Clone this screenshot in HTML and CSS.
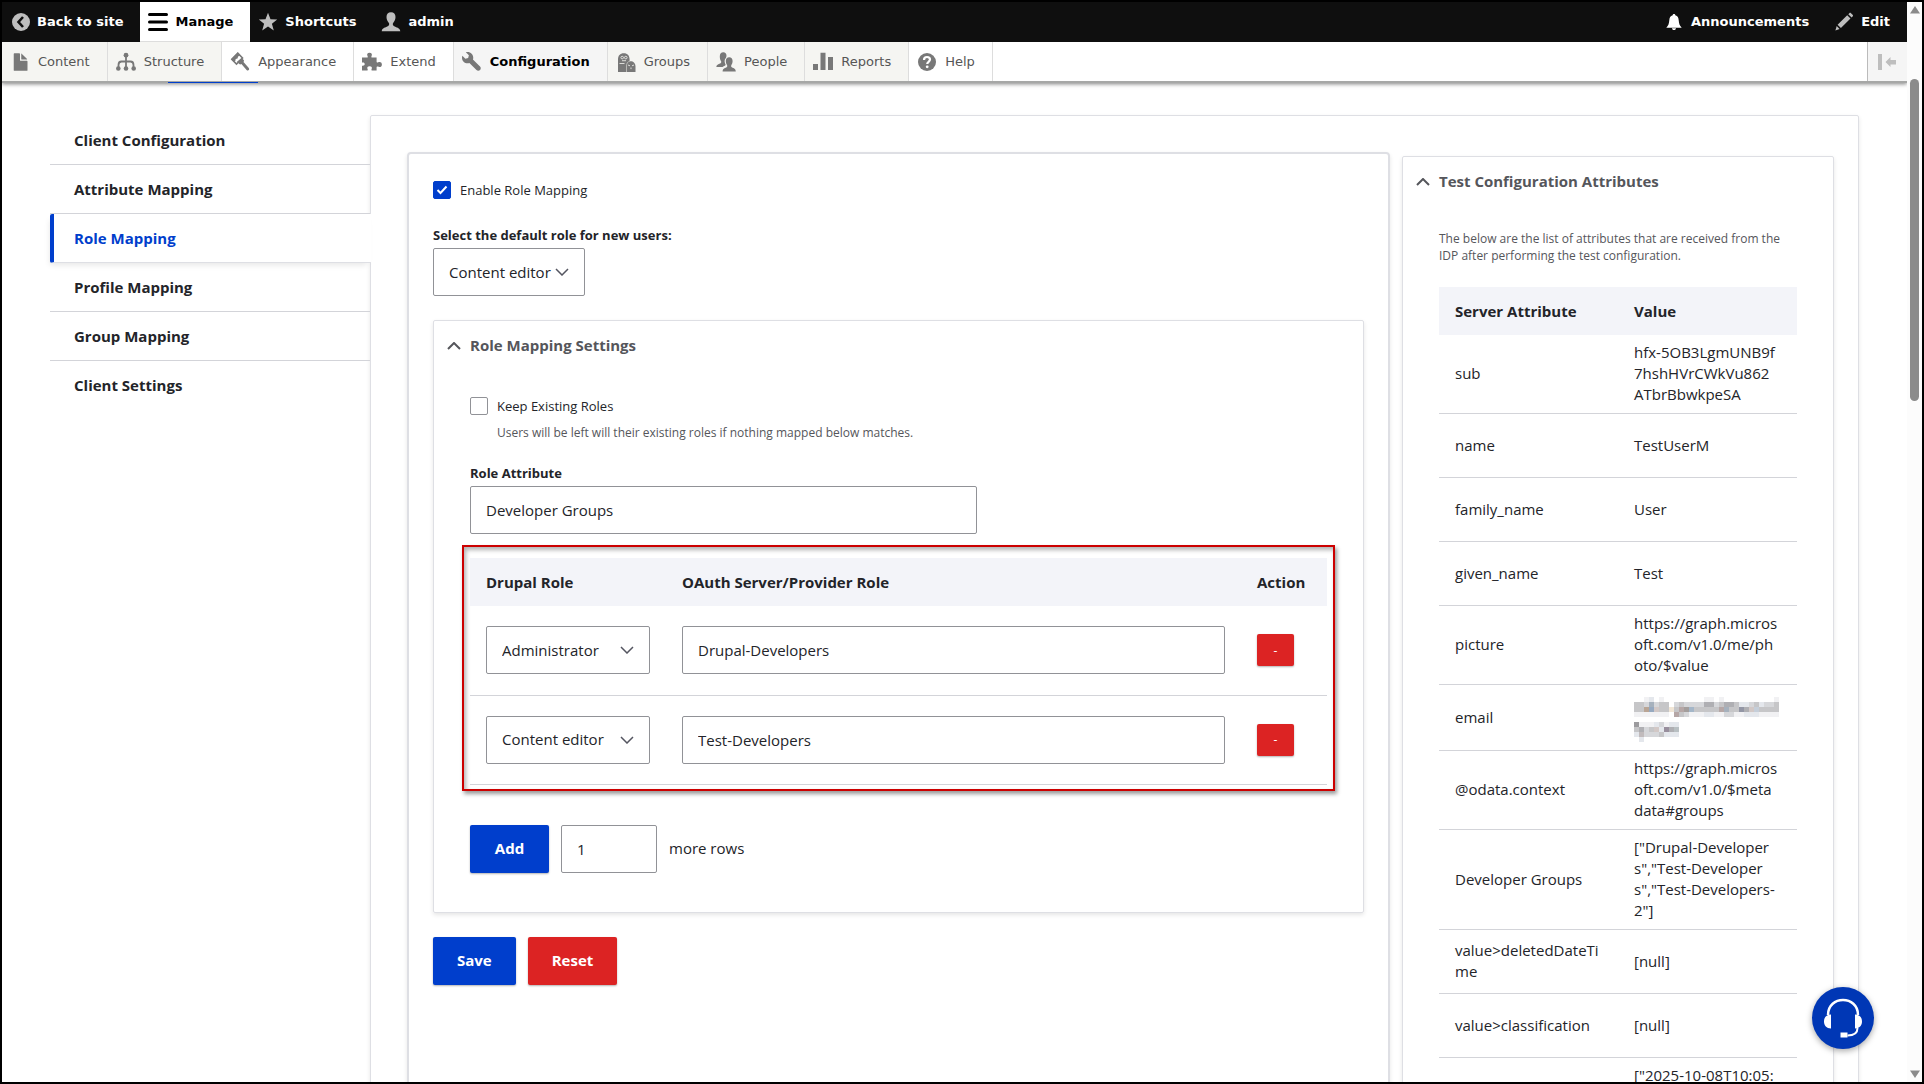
FILE: index.html
```html
<!DOCTYPE html>
<html lang="en">
<head>
<meta charset="utf-8">
<title>Role Mapping</title>
<link rel="stylesheet" href="styles.css">
</head>
<body>
<div class="window">
  <div class="page">
    <header class="toolbar">
      <nav class="bar" aria-label="Toolbar">
        <a href="#" class="bar-item"><svg class="icon" viewBox="0 0 20 20"><circle cx="11" cy="10" r="9" fill="#bebebe"/><path d="M13 5 8.500 10 13 15" fill="none" stroke="#0f0f0f" stroke-width="2.600"/></svg>Back to site</a>
        <a href="#" class="bar-item bar-item-open"><svg class="icon" viewBox="0 0 20 20"><path d="M1.500 2.500h17M1.500 10h17M1.500 17.500h17" stroke="#000" stroke-width="3" stroke-linecap="round"/></svg>Manage</a>
        <a href="#" class="bar-item"><svg class="icon" viewBox="0 0 20 20"><path d="M10 .8l2.500 6.500 6.700.2-5.300 4.200 1.900 6.700L10 14.600l-5.800 3.800 1.900-6.700L.8 7.500l6.700-.2z" fill="#bebebe"/></svg>Shortcuts</a>
        <a href="#" class="bar-item"><svg class="icon" viewBox="0 0 20 20"><path d="M10 .3c2.900 0 4.500 2 4.500 4.800 0 2.400-1 4.300-2.200 5.700-.8.900-.6 2.500.5 3.200 2.500 1.500 6 1.700 6.500 5.200H.7c.5-3.500 4-3.700 6.500-5.200 1.100-.7 1.300-2.300.5-3.200C6.500 9.400 5.500 7.500 5.500 5.100 5.500 2.300 7.100.3 10 .3z" fill="#bebebe"/></svg>admin</a>
        <span class="spacer"></span>
        <a href="#" class="bar-item"><svg class="icon" viewBox="0 0 20 20"><path d="M10 2c.8 0 1.300.5 1.300 1.300 2.500.6 3.200 2.700 3.400 5 .3 3.400.8 5.200 3 7.500H2.300c2.200-2.300 2.700-4.100 3-7.500.2-2.300.9-4.400 3.400-5C8.700 2.500 9.200 2 10 2zM8 16.200h4c0 1-.8 1.800-2 1.800s-2-.8-2-1.800z" fill="#fff"/></svg>Announcements</a>
        <a href="#" class="bar-item"><svg class="icon" viewBox="0 0 20 20"><path d="M14.300 2.200l1-1c.6-.6 1.200-.5 1.700 0l1.600 1.600c.6.600.6 1.200 0 1.700l-1 1zM3.600 12.800l9.600-9.600 3.300 3.300-9.600 9.600zM1.400 18.400l1.300-4.300 2.900 3z" fill="#bebebe"/></svg>Edit</a>
      </nav>
      <nav class="tray" aria-label="Administration menu">
        <a href="#" class="tray-item shaded"><svg class="icon" viewBox="-1 0 16 16"><path fill="#787878" d="M12.500 7h-5c-.276 0-.502-.225-.502-.5v-5c0-.275-.226-.5-.502-.5h-4c-.275 0-.5.225-.5.5v13c0 .276.225.5.5.5h10c.275 0 .5-.225.5-.5v-7c0-.273-.225-.5-.498-.5zM8.500 6h4c.275 0 .34-.159.146-.354L8.353 1.353C8.158 1.158 8 1.224 8 1.500v4c0 .276.225.5.5.5z"/></svg>Content</a>
        <a href="#" class="tray-item shaded"><svg class="icon" viewBox="0 0 20 20"><g fill="#787878"><circle cx="10" cy="3.200" r="2.400"/><circle cx="2.300" cy="16.500" r="2.300"/><circle cx="10" cy="16.500" r="2.300"/><circle cx="17.700" cy="16.500" r="2.300"/></g><path d="M10 4v12M2.500 16v-3c0-2.500 1-3.500 3-3.500h9c2 0 3 1 3 3.500v3" fill="none" stroke="#787878" stroke-width="1.800"/></svg>Structure</a>
        <a href="#" class="tray-item"><svg class="icon" viewBox="0 0 20 20"><path d="M1.800 7.200 7.800 1.200 12.500 6 6.500 12z" fill="none" stroke="#787878" stroke-width="1.600"/><path d="M1 7.200 7.800.6l2.500 2.600-2.200 1.200-.6 2-1.800.5-.4 2-1.800.9zM11.700 6l2 2.100c.6.7.2 1.500-.2 2l5.300 6c1.200 1.600-.8 3.400-2.200 2l-5.200-6.200c-.7.600-1.500.7-2.100.1L7 9.800z" fill="#787878"/></svg>Appearance</a>
        <a href="#" class="tray-item"><svg class="icon" viewBox="0 0 20 20"><path d="M0 5.600h5.200c.8 0 .7-.7.300-1.500C4.700 2.400 5.300.8 7.500.8s2.900 1.600 2.100 3.300c-.4.800-.4 1.500.4 1.500h4.600v4.200c0 .8.500 1 1.300.6 1.700-.9 4-.5 4 2.100s-2.300 3-4 2.100c-.8-.4-1.300-.2-1.300.6v3.300H10c-.8 0-.7-.6-.4-1.200.8-1.700 0-3-2-3s-2.800 1.300-2 3c.3.600.4 1.200-.4 1.200H0v-4.800c1.700.4 2.700-.4 2.700-1.600S1.700 10.200 0 10.600z" fill="#787878"/></svg>Extend</a>
        <a href="#" class="tray-item current"><svg class="icon" viewBox="0 0 16 16"><path fill="#787878" d="M14.416 11.586 8.750 5.921c.15-.449.252-.921.252-1.421C9.002 2.015 6.986 0 4.500 0c-.505 0-.981.102-1.434.255l2.431 2.431-.588 2.196-2.196.588L.268 3.025C.106 3.489 0 3.981 0 4.500 0 6.986 2.014 9 4.500 9c.5 0 .972-.102 1.421-.251l5.667 5.665c.781.781 2.047.781 2.828 0s.781-2.047 0-2.828z"/></svg>Configuration</a>
        <a href="#" class="tray-item shaded"><svg class="icon" viewBox="0 0 20 20"><path d="M2 20V7.500C2 3.500 4 1.200 7.800 1.200s5.800 2.300 5.800 6.300V9.200c3.600-.4 5.900 1.800 5.900 5V20z" fill="#787878"/><path d="M10.500 20v-6c0-2.600 1.200-4.400 3.500-5" fill="none" stroke="#c8c8c4" stroke-width=".8"/><g fill="none" stroke="#e8e8e4" stroke-width=".9"><circle cx="6.200" cy="5.600" r="1.300"/><circle cx="9.800" cy="5.600" r="1.300"/><path d="M6 8.700h4M3.500 11.500h5M12 13l2 .8M18 13l-2 .8M15 15.500v1.600"/></g></svg>Groups</a>
        <a href="#" class="tray-item shaded"><svg class="icon" viewBox="0 0 20 20"><path d="M7.300.3c2 0 3.200 1.400 3.200 3.400 0 1-.3 1.800-.6 2.400-1.300 1.200-1.600 3.300-.9 5.200.4 1 1 1.500.4 2-.6.600-2 .8-2.800 1.700H.3c.2-2.200 2-2.800 3.800-3.500 1.300-.5 1.500-1.700.7-2.700-.6-.8-1-2.700-1-4.600C3.800 1.900 5.200.3 7.300.3zM13.200 5.300c2.100 0 3.400 1.500 3.400 3.600 0 2-.7 3.200-1.200 4.100-.5 1-.3 2 .7 2.500 1.600.8 3.500 1 3.700 3.900H6.600c.2-2.900 2.100-3.100 3.700-3.900 1-.5 1.200-1.500.7-2.500-.5-.9-1.200-2.100-1.200-4.100 0-2.100 1.300-3.600 3.400-3.600z" fill="#787878"/></svg>People</a>
        <a href="#" class="tray-item shaded"><svg class="icon" viewBox="0 0 20 20"><path d="M0 12h5v6H0zM7.500 0.800h5V18h-5zM15 5h5v13h-5z" fill="#787878"/></svg>Reports</a>
        <a href="#" class="tray-item"><svg class="icon" viewBox="0 0 20 20"><circle cx="10" cy="10" r="9" fill="#787878"/><path d="M7 8c0-2 1.200-3 3-3s3 1 3 2.600c0 2.200-2.800 2.200-2.800 4.400" fill="none" stroke="#fff" stroke-width="2.200"/><circle cx="10.200" cy="14.800" r="1.400" fill="#fff"/></svg>Help</a>
        <span class="spacer"></span>
        <button class="tray-toggle" type="button" aria-label="Vertical orientation"><svg width="20" height="20" viewBox="0 0 20 20"><path d="M1 2h4v16H1zM8.500 10l5-5v3H19v4.500h-5.500V15z" fill="#bebebe"/></svg></button>
      </nav>
      <div class="tabs-edge"><span></span></div>
    </header>

    <main class="content">
      <nav class="side-tabs" aria-label="Module sections">
        <a href="#" class="side-tab">Client Configuration</a>
        <a href="#" class="side-tab">Attribute Mapping</a>
        <a href="#" class="side-tab active">Role Mapping</a>
        <a href="#" class="side-tab">Profile Mapping</a>
        <a href="#" class="side-tab">Group Mapping</a>
        <a href="#" class="side-tab">Client Settings</a>
      </nav>

      <div class="panel">
        <form class="card">
          <label class="check"><input type="checkbox" checked>Enable Role Mapping</label>
          <label class="field-label first-label" for="default-role">Select the default role for new users:</label>
          <select id="default-role" class="control select-fit"><option>Content editor</option></select>

          <section class="details role-details">
            <h2 class="summary"><svg class="caret" viewBox="0 0 14 8"><path d="M1 7l6-6 6 6"/></svg>Role Mapping Settings</h2>
            <div class="details-body">
              <label class="check"><input type="checkbox">Keep Existing Roles</label>
              <p class="hint">Users will be left will their existing roles if nothing mapped below matches.</p>
              <label class="field-label" for="role-attr">Role Attribute</label>
              <input id="role-attr" class="control role-attr" type="text" value="Developer Groups">

              <div class="marked">
                <table class="roles">
                  <thead><tr><th class="col-role">Drupal Role</th><th>OAuth Server/Provider Role</th><th class="col-action">Action</th></tr></thead>
                  <tbody>
                    <tr>
                      <td><select class="control" aria-label="Drupal role 1"><option>Administrator</option></select></td>
                      <td><input class="control" type="text" aria-label="Provider role 1" value="Drupal-Developers"></td>
                      <td><button class="button danger small" type="button">-</button></td>
                    </tr>
                    <tr>
                      <td><select class="control" aria-label="Drupal role 2"><option>Content editor</option></select></td>
                      <td><input class="control" type="text" aria-label="Provider role 2" value="Test-Developers"></td>
                      <td><button class="button danger small" type="button">-</button></td>
                    </tr>
                  </tbody>
                </table>
              </div>

              <div class="add-rows">
                <button class="button primary" type="button">Add</button>
                <input id="row-count" class="control count" type="text" inputmode="numeric" value="1">
                <label for="row-count">more rows</label>
              </div>
            </div>
          </section>

          <div class="actions">
            <button class="button primary" type="button">Save</button>
            <button class="button danger" type="button">Reset</button>
          </div>
        </form>

        <aside class="details test-details">
          <h2 class="summary"><svg class="caret" viewBox="0 0 14 8"><path d="M1 7l6-6 6 6"/></svg>Test Configuration Attributes</h2>
          <div class="details-body">
            <p class="intro">The below are the list of attributes that are received from the IDP after performing the test configuration.</p>
            <table class="attributes">
              <thead><tr><th>Server Attribute</th><th>Value</th></tr></thead>
              <tbody>
                <tr><td>sub</td><td>hfx-5OB3LgmUNB9f<br>7hshHVrCWkVu862<br>ATbrBbwkpeSA</td></tr>
                <tr><td>name</td><td>TestUserM</td></tr>
                <tr><td>family_name</td><td>User</td></tr>
                <tr><td>given_name</td><td>Test</td></tr>
                <tr><td>picture</td><td>https://graph.micros<br>oft.com/v1.0/me/ph<br>oto/$value</td></tr>
                <tr><td>email</td><td>
                  <svg class="redacted" viewBox="0 -1 29 10" role="img" aria-label="Redacted address">
                    <path stroke="#f1f1f3" d="M2 .5h1M5 .5h1M14 .5h2M17 .5h1M28 .5h1M0 3.500h7M11 3.500h3M16 3.500h2M20 3.500h2M25 3.500h4M1 5.500h3M6 5.500h1"/>
                    <path stroke="#e4e7ec" d="M3 .5h1M21 1.500h2M25 1.500h1M14 3.500h2M22 3.500h3M4 5.500h1M7 5.500h2M0 7.500h1M6 7.500h3M1 8.500h1M5 6.500h1"/>
                    <path stroke="#d6d7da" d="M2 1.500h1M4 1.500h1M8 1.500h1M10 1.500h4M16 1.500h1M23 1.500h1M26 1.500h2M10 3.500h1M18 3.500h2M5 5.500h1M2 7.500h3M2 6.500h1"/>
                    <path stroke="#c6c6c8" d="M0 1.500h2M5 1.500h2M9 1.500h1M17 1.500h1M20 1.500h1M24 1.500h1M28 1.500h1M0 2.500h2M5 2.500h2M8 2.500h1M12 2.500h5M19 2.500h2M25 2.500h4M9 3.500h1M0 6.500h1M3 6.500h1M5 7.500h1"/>
                    <path stroke="#afafb3" d="M14 1.500h2M18 1.500h2M22 2.500h1M1 6.500h1M7 6.500h1"/>
                    <path stroke="#b8bfc2" d="M8 6.500h1"/>
                    <path stroke="#a6b1bd" d="M3 1.500h1M18 2.500h1"/>
                    <path stroke="#96a9c0" d="M3 2.500h1"/>
                    <path stroke="#a4b6c8" d="M11 2.500h1"/>
                    <path stroke="#c5ced9" d="M24 2.500h1"/>
                    <path stroke="#b9a595" d="M2 2.500h1"/>
                    <path stroke="#b6a7a6" d="M9 2.500h1M17 2.500h1M8 3.500h1"/>
                    <path stroke="#a39e9c" d="M10 2.500h1"/>
                    <path stroke="#d2c8c6" d="M4 2.500h1M23 2.500h1M4 6.500h1"/>
                    <path stroke="#f1e6d6" d="M7 2.500h1"/>
                    <path stroke="#9396a5" d="M21 2.500h1"/>
                    <path stroke="#9c9b9e" d="M0 5.500h1"/>
                    <path stroke="#988e9d" d="M6 6.500h1"/>
                    <path stroke="#c1bbbc" d="M1 7.500h1"/>
                  </svg>
                </td></tr>
                <tr><td>@odata.context</td><td>https://graph.micros<br>oft.com/v1.0/$meta<br>data#groups</td></tr>
                <tr><td>Developer Groups</td><td>["Drupal-Developer<br>s","Test-Developer<br>s","Test-Developers-<br>2"]</td></tr>
                <tr><td>value&gt;deletedDateTi<br>me</td><td>[null]</td></tr>
                <tr><td>value&gt;classification</td><td>[null]</td></tr>
                <tr class="tall"><td></td><td>["2025-10-08T10:05:</td></tr>
              </tbody>
            </table>
          </div>
        </aside>
      </div>
    </main>
    <button class="support" type="button" aria-label="Support"><svg viewBox="0 0 62 62"><path d="M16 28C16 8 46 8 46 28" fill="none" stroke="#fff" stroke-width="2.500"/><path d="M19 27.500v14c-4.500 0-7-3-7-7s2.500-7 7-7zM43 27.500v14c4.500 0 7-3 7-7s-2.500-7-7-7zM28.500 45.500h7v5h-7z" fill="#fff"/><path d="M45.500 41c0 5-3 7.500-10 7.500" fill="none" stroke="#fff" stroke-width="2"/></svg></button>
  </div>
  <div class="scrollbar" aria-hidden="true">
    <svg width="10" height="8" viewBox="0 0 10 8"><path d="M5 0l5 7.500H0z"/></svg>
    <span class="thumb"></span>
    <svg width="10" height="8" viewBox="0 0 10 8"><path d="M5 8l5-7.500H0z"/></svg>
  </div>
</div>
</body>
</html>
```
FILE: styles.css
```css
* { box-sizing: border-box; }

body {
  margin: 0;
  font-family: "Open Sans", "Noto Sans", sans-serif;
  font-size: 15px;
  line-height: 21px;
  color: #232429;
  background: #fff;
}

a { color: inherit; text-decoration: none; }

.window {
  display: flex;
  height: 100vh;
  border: 2px solid #000;
  overflow: hidden;
}

.page {
  position: relative;
  flex: 1;
  min-width: 0;
  display: flex;
  flex-direction: column;
  overflow: hidden;
}

/* Toolbar */
.toolbar {
  flex: none;
  font-family: "DejaVu Sans", sans-serif;
  font-size: 13px;
  line-height: 20px;
  box-shadow: 0 1px 4px rgba(0, 0, 0, .5);
}

.bar { display: flex; height: 40px; background: #0f0f0f; color: #fff; font-weight: 700; }
.bar-item { display: flex; align-items: center; gap: 7px; padding: 0 17px 0 8px; }
.bar-item-open { background: #fff; color: #000; border-bottom: 1px solid #ddd; }
.icon { flex: none; width: 20px; height: 20px; }
.spacer { flex: 1; }

.tray { display: flex; height: 39px; color: #565656; background: #fff; }
.tray-item {
  display: flex;
  align-items: center;
  gap: 8px;
  padding: 0 17px 0 8px;
  border-right: 1px solid #ddd;
}
.shaded { background: #f5f5f2; }
.current { background: #f5f5f5; color: #000; font-weight: 700; }
.tray-toggle {
  display: flex;
  align-items: center;
  width: 40px;
  padding: 0 0 0 9px;
  border: 0;
  border-left: 1px solid #bbb;
  background: #f5f5f5;
}
.tabs-edge { height: 2px; padding-left: 166px; background: #a6a7a6; }
.tabs-edge span { display: block; width: 90px; height: 2px; border-bottom: 1px solid #003ecc; }

/* Page body */
.content {
  flex: 1;
  min-height: 0;
  display: flex;
  align-items: flex-start;
  padding: 32px 48px 0 48px;
}

.side-tabs { flex: none; width: 321px; margin: 1px -1px 0 0; position: relative; }
.side-tab {
  display: block;
  height: 49px;
  margin-right: 1px;
  padding: 14px 24px;
  border-bottom: 1px solid #d3d4d9;
  font-weight: 700;
}
.side-tab:last-child { border-bottom: 0; }
.side-tab.active {
  margin-right: 0;
  padding-left: 20px;
  border-left: 4px solid #003ecc;
  border-bottom-color: #dedfe4;
  border-radius: 2px 0 0 2px;
  background: #fff;
  color: #003ecc;
  box-shadow: -2px 4px 6px -2px rgba(0, 0, 0, .1);
}

.panel {
  flex: 1;
  min-width: 0;
  display: grid;
  grid-template-columns: minmax(0, 983fr) minmax(0, 432fr);
  gap: 12px;
  align-items: start;
  padding: 36px 24px 36px 36px;
  border: 1px solid #dedfe4;
  border-radius: 2px;
  box-shadow: 0 2px 4px rgba(0, 0, 0, .1);
}

.card {
  min-height: 100vh;
  padding: 24px;
  border: 2px solid #dedfe4;
  border-radius: 4px;
  box-shadow: 0 2px 4px rgba(0, 0, 0, .1);
}

.check { display: flex; align-items: center; gap: 9px; height: 24px; font-size: 13px; }
.check input {
  appearance: none;
  width: 18px;
  height: 18px;
  margin: 0;
  border: 1px solid #919297;
  border-radius: 2px;
  background: #fff;
}
.check input:checked {
  border-color: #003ecc;
  background: #003ecc url("data:image/svg+xml,%3Csvg xmlns='http://www.w3.org/2000/svg' viewBox='0 0 16 16'%3E%3Cpath d='M3.500 8l3 3 6-6.500' fill='none' stroke='white' stroke-width='2'/%3E%3C/svg%3E") center / 16px;
}

.field-label { display: block; font-size: 13px; font-weight: 700; line-height: 18px; margin-bottom: 4px; }
.first-label { margin-top: 24px; }

.control {
  display: block;
  width: 100%;
  height: 48px;
  padding: 0 15px;
  border: 1px solid #919297;
  border-radius: 2px;
  background-color: #fff;
  color: #232429;
  font: inherit;
}
select.control {
  appearance: none;
  background-image: url("data:image/svg+xml,%3Csvg xmlns='http://www.w3.org/2000/svg' viewBox='0 0 14 8'%3E%3Cpath d='M1 1l6 6 6-6' fill='none' stroke='%23545560' stroke-width='1.500'/%3E%3C/svg%3E");
  background-repeat: no-repeat;
  background-position: right 15px center;
  background-size: 14px 8px;
}
.select-fit { width: 152px; }
.role-attr { width: 507px; max-width: 100%; }

.details {
  border: 1px solid #dedfe4;
  border-radius: 2px;
  box-shadow: 0 2px 4px rgba(0, 0, 0, .1);
}
.role-details { margin-top: 24px; }
.test-details { margin-top: 4px; }
.summary {
  display: flex;
  align-items: center;
  gap: 9px;
  height: 49px;
  margin: 0;
  padding-left: 13px;
  font-size: 15px;
  color: #55565b;
}
.caret { width: 14px; height: 8px; fill: none; stroke: #55565b; stroke-width: 2; }
.details-body { padding: 24px 36px; }

.hint { margin: 6px 0 22px 27px; font-size: 12px; line-height: 18px; color: #55565b; }
.intro { margin: 0; font-size: 12px; line-height: 17px; color: #55565b; }

table { width: 100%; border-collapse: collapse; }
th { height: 48px; padding: 0 16px; background: #f3f4f9; text-align: left; }
td { border-bottom: 1px solid #d3d4d9; }

/* Outlined mapping table */
.marked {
  margin: 11px -8px 0;
  padding: 11px 6px 4px;
  border: 2px solid #c00;
  box-shadow: 2px 3px 4px rgba(0, 0, 0, .4), inset 2px 3px 4px rgba(0, 0, 0, .3);
}
.roles th, .roles td { padding-left: 16px; padding-right: 16px; }
.roles td { height: 89px; }
.col-role { width: 196px; }
.col-action { width: 86px; }

.button {
  height: 48px;
  min-width: 79px;
  padding: 0 24px;
  border: 0;
  border-radius: 2px;
  color: #fff;
  font: inherit;
  font-weight: 700;
  box-shadow: 0 1px 2px rgba(0, 0, 0, .3);
}
.primary { background: #003ecc; }
.danger { background: #dc2323; }
.small { display: block; width: 37px; min-width: 0; height: 32px; padding: 0; font-size: 12px; font-weight: 400; }

.add-rows { display: flex; align-items: center; gap: 12px; margin: 34px 0 15px; }
.count { width: 96px; }
.actions { display: flex; gap: 12px; margin-top: 24px; }

.attributes { margin-top: 23px; table-layout: fixed; }
.attributes td { height: 64px; padding: 7px 16px 8px; }
.attributes .tall td { vertical-align: top; }
.redacted { display: block; width: 145px; height: 50px; fill: none; stroke-width: 1; shape-rendering: crispEdges; }

.support {
  position: absolute;
  right: 33px;
  bottom: 33px;
  width: 62px;
  height: 62px;
  padding: 0;
  border: 0;
  border-radius: 50%;
  background: #0037b5;
  box-shadow: 0 2px 6px rgba(0, 0, 0, .35);
}
.support svg { display: block; }

.scrollbar {
  flex: none;
  width: 15px;
  display: flex;
  flex-direction: column;
  align-items: center;
  padding: 4px 0;
  background: #fcfcfc;
}
.scrollbar svg { fill: #8b8b8b; flex: none; }
.scrollbar svg:last-child { margin-top: auto; }
.thumb { width: 9px; height: 30%; margin-top: 65px; border-radius: 5px; background: #8b8b8b; }
```
